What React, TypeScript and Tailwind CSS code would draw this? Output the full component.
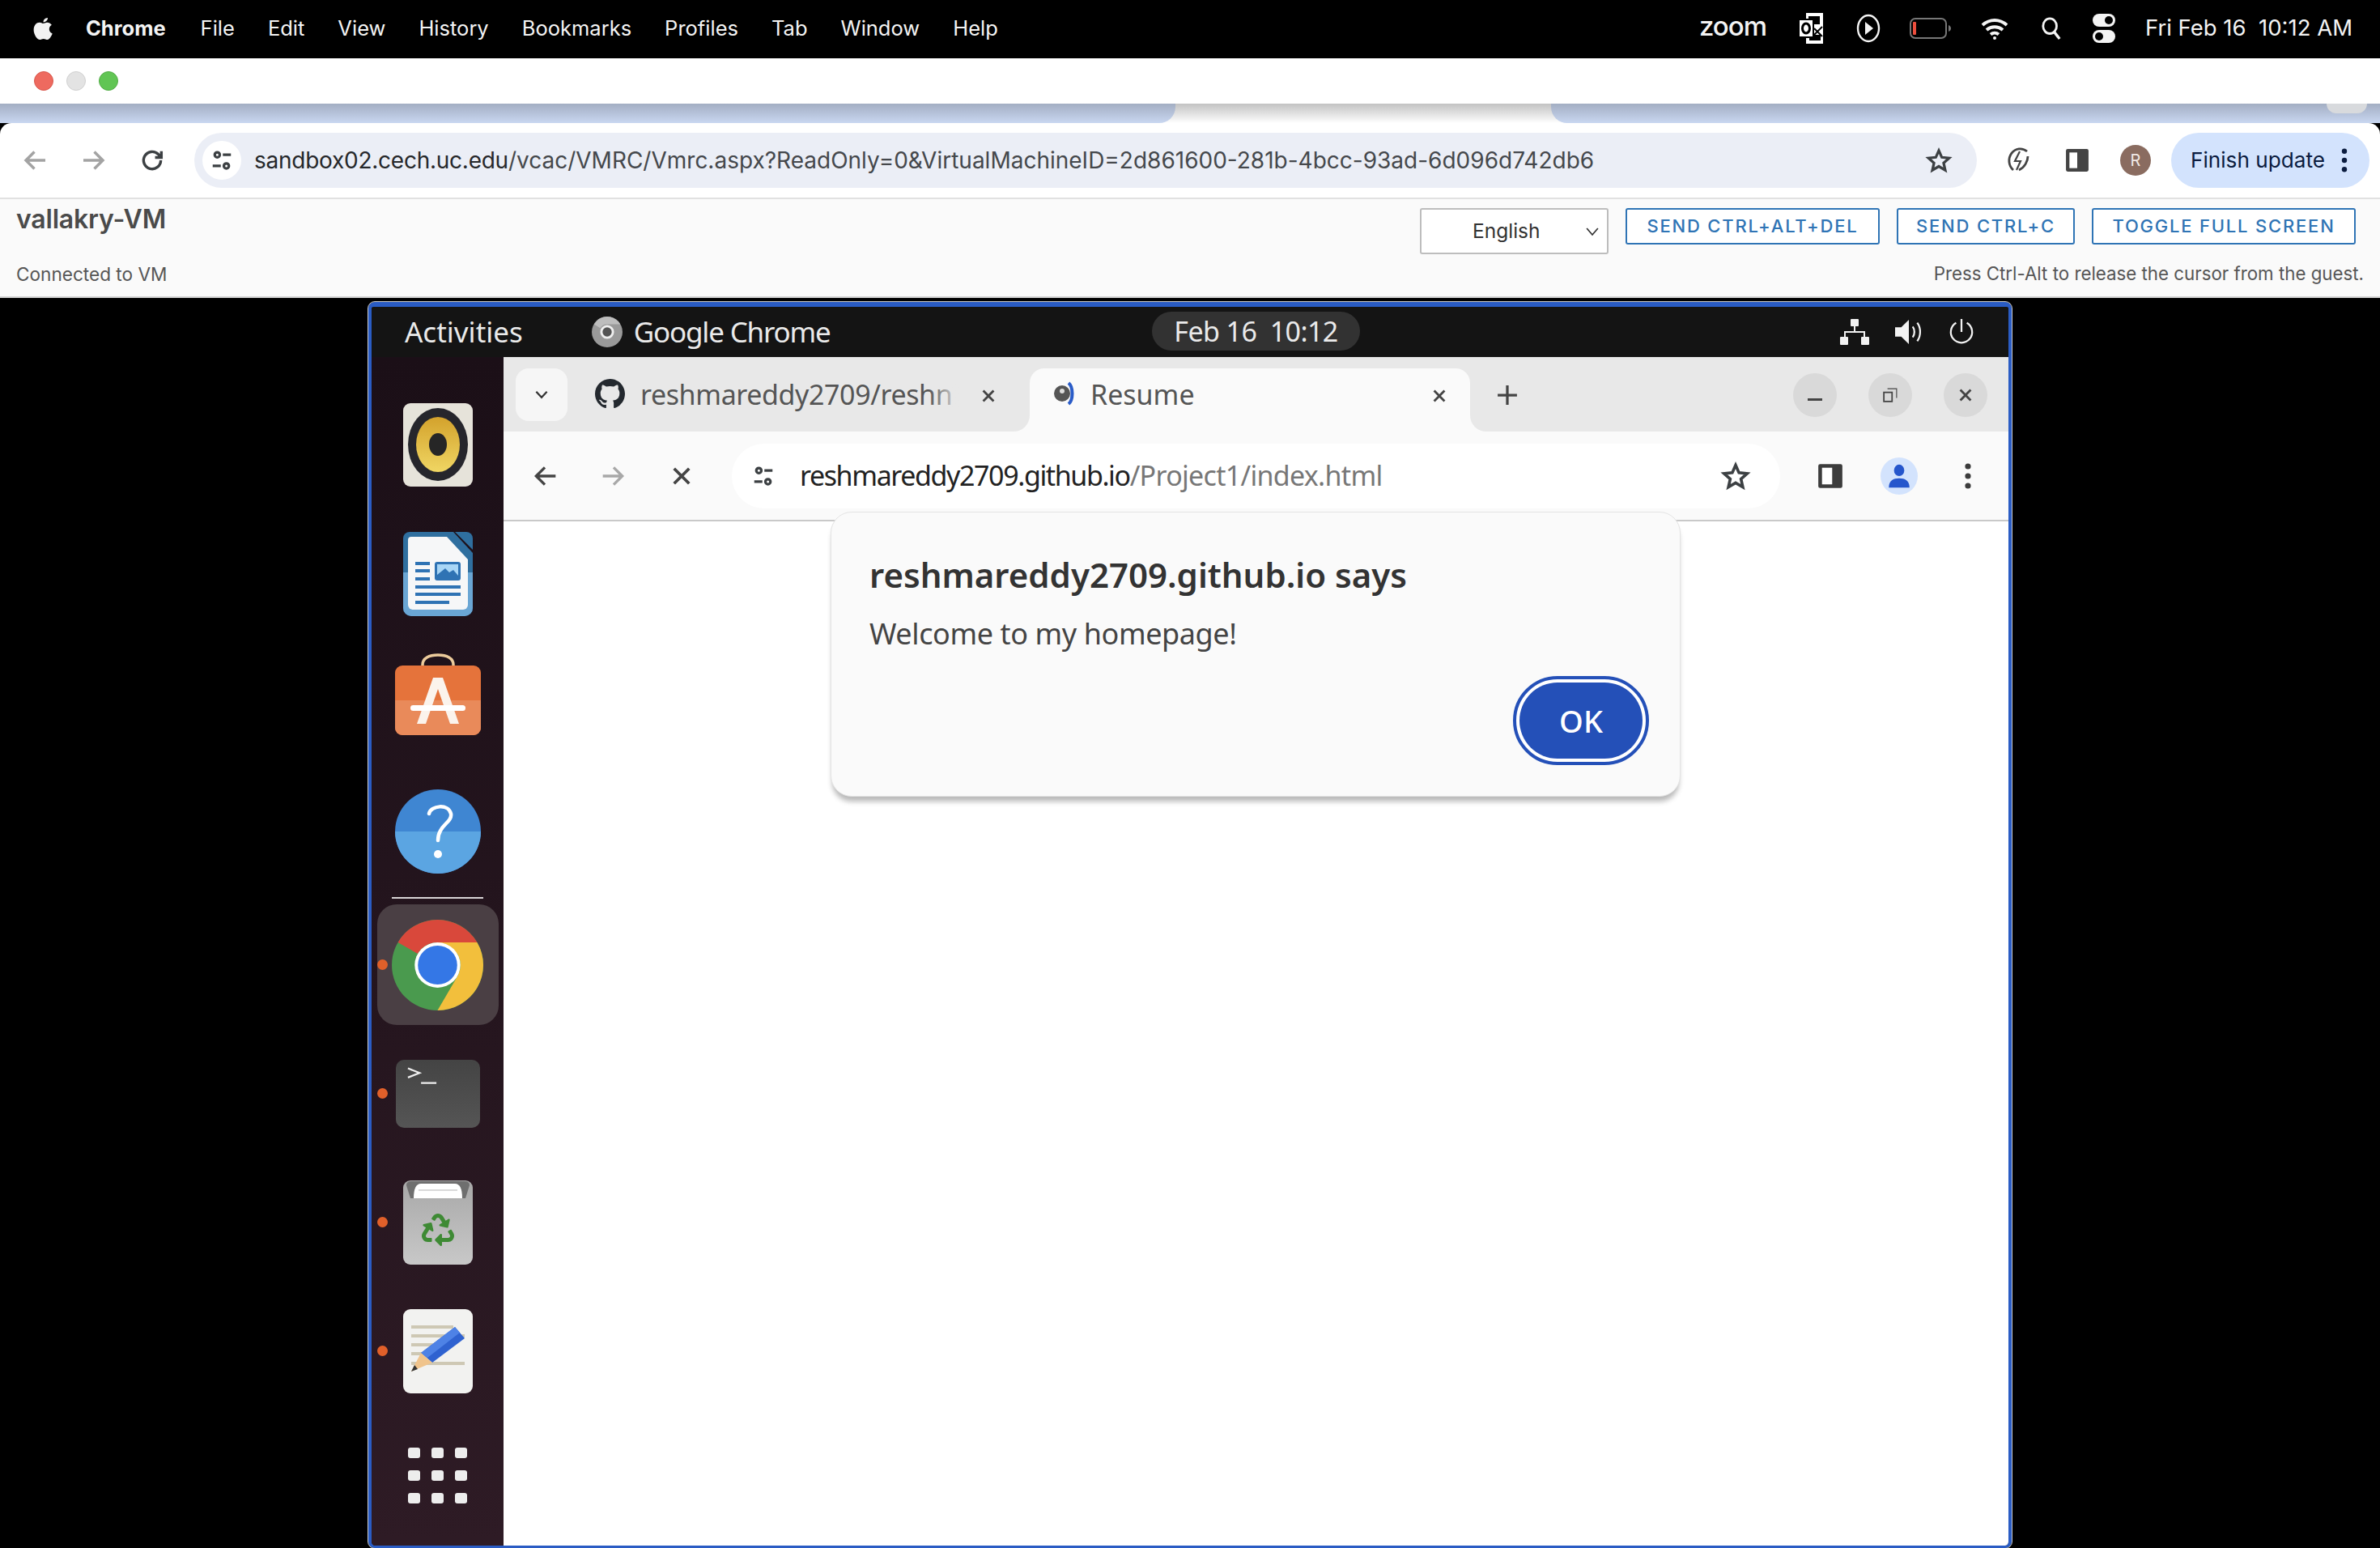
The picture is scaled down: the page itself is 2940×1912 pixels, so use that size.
import React from "react";
import { FaRecycle } from "react-icons/fa";

const MAC = { fontFamily: 'Inter, "Liberation Sans", sans-serif' };
const UB = { fontFamily: '"Noto Sans", "Open Sans", sans-serif' };

function AppleLogo() {
  return (
    <svg viewBox="0 0 24 28" className="w-[26px] h-[32px]" fill="#f2f2f2">
      <path d="M17.5 2c.2 2-1.800 5-5 5-.3-2.300 2-5 5-5z" />
      <path d="M12 8.500c1.300 0 2.800-1.200 5-1.200 1.600 0 3.700.8 5 2.800-4.200 2.600-3.400 8.200.8 9.900-1.100 3-3.500 7-5.800 7-1.600 0-2.500-1-4.300-1s-2.900 1-4.300 1C5.500 27 1.500 21 1.500 15.800c0-5.400 3.400-8.400 6.600-8.400 1.800 0 3 1.100 3.900 1.100z" />
    </svg>
  );
}

function Tune({ c = "#3c4043" }: { c?: string }) {
  return (
    <svg viewBox="0 0 24 24" className="w-[30px] h-[30px]" fill="none" stroke={c} strokeWidth="2.600">
      <circle cx="7.500" cy="6.500" r="2.500" />
      <path d="M13 6.500h8M3 17.500h8" />
      <circle cx="16.500" cy="17.500" r="2.500" />
    </svg>
  );
}

function Star({ c = "#3c4043", w = 34, h = 34 }: { c?: string; w?: number; h?: number }) {
  return (
    <svg viewBox="0 0 24 24" width={w} height={h} fill="none" stroke={c} strokeWidth="2.300" strokeLinejoin="miter">
      <path d="M12 3.500l2.600 5.900 6.400.6-4.800 4.300 1.400 6.300L12 17.300l-5.600 3.300 1.400-6.300L3 10l6.400-.6z" />
    </svg>
  );
}

function MenuBar() {
  const items = ["File", "Edit", "View", "History", "Bookmarks", "Profiles", "Tab", "Window", "Help"];
  return (
    <div className="h-[72px] shrink-0 bg-black text-[#f4f4f4] flex items-center text-[25.5px] pl-[40px] pr-[34px] pb-[2px]" style={MAC}>
      <AppleLogo />
      <span className="ml-[40px] font-bold">Chrome</span>
      <div className="flex gap-[41px] ml-[43px]">
        {items.map((m) => (
          <span key={m}>{m}</span>
        ))}
      </div>
      <div className="ml-auto flex items-center">
        <span className="text-[33px] font-medium tracking-[-1px] leading-none -mt-[6px]">zoom</span>
        <svg viewBox="0 0 32 40" className="w-[32px] h-[40px] ml-[39px]">
          <path d="M10 1h21v38H10z" fill="#fff" />
          <path d="M13 5h14v10H13zM14 28h14v7H14z" fill="#000" />
          <path d="M1 9h18v22H1z" fill="#fff" stroke="#000" strokeWidth="2" />
          <ellipse cx="10" cy="20" rx="4.500" ry="6" fill="none" stroke="#000" strokeWidth="3" />
          <path d="M20 20l10 10M30 18L20 28" stroke="#000" strokeWidth="2" />
        </svg>
        <svg viewBox="0 0 30 36" className="w-[30px] h-[36px] ml-[40px]" fill="none">
          <ellipse cx="15" cy="18" rx="13" ry="16" stroke="#f4f4f4" strokeWidth="2.400" />
          <path d="M11 10l10 8-10 8z" fill="#f4f4f4" />
        </svg>
        <svg viewBox="0 0 52 26" className="w-[52px] h-[26px] ml-[36px]" fill="none">
          <rect x="1" y="1" width="44" height="24" rx="6" stroke="#777" strokeWidth="2" />
          <rect x="4" y="5" width="4" height="16" rx="1" fill="#eb4e3d" />
          <path d="M48 9c2 1 3 2 3 4s-1 3-3 4z" fill="#777" />
        </svg>
        <svg viewBox="0 0 34 30" className="w-[34px] h-[30px] ml-[36px]" fill="none" stroke="#f4f4f4" strokeWidth="4">
          <path d="M2 11c9-8 21-8 30 0M7 17c6-5 14-5 20 0M12 22.500c3-2.500 7-2.500 10 0" />
          <circle cx="17" cy="27" r="2" fill="#f4f4f4" stroke="none" />
        </svg>
        <svg viewBox="0 0 28 32" className="w-[26px] h-[30px] ml-[40px]" fill="none" stroke="#f4f4f4" strokeWidth="3">
          <ellipse cx="12" cy="13" rx="9" ry="10" />
          <path d="M18 21l7 9" strokeWidth="3.600" />
        </svg>
        <svg viewBox="0 0 28 36" className="w-[28px] h-[36px] ml-[38px]" fill="#f4f4f4">
          <rect x="0" y="0" width="28" height="16" rx="8" />
          <circle cx="20" cy="8" r="5" fill="#000" />
          <rect x="0" y="20" width="28" height="16" rx="8" />
          <circle cx="8" cy="28" r="5" fill="#000" />
        </svg>
        <span className="ml-[37px] text-[27.5px]">Fri Feb 16&nbsp; 10:12 AM</span>
      </div>
    </div>
  );
}

function MacChrome() {
  return (
    <>
      <div className="h-[56px] shrink-0 bg-white flex items-center gap-[16px] pl-[42px]">
        <span className="w-[24px] h-[24px] rounded-full bg-[#ee6a5f] border border-[#d8574c]" />
        <span className="w-[24px] h-[24px] rounded-full bg-[#e3e3e3] border border-[#d0d0d0]" />
        <span className="w-[24px] h-[24px] rounded-full bg-[#61c554] border border-[#52ac46]" />
      </div>
      <div className="h-[24px] shrink-0 flex bg-gradient-to-b from-[#c2c2c2] to-white">
        <div className="w-[1452px] rounded-br-[20px] bg-gradient-to-b from-[#a3aec3] to-[#c9d7f1]" />
        <div className="flex-1" />
        <div className="w-[1024px] rounded-bl-[20px] bg-gradient-to-b from-[#a3aec3] to-[#c9d7f1] flex justify-end pr-[16px]">
          <div className="w-[50px] h-[12px] rounded-b-full bg-[#d8dadd]" />
        </div>
      </div>
      <div className="h-[94px] shrink-0 bg-white flex items-center rounded-t-[14px] border-b-2 border-[#e1e1e1] pl-[26px] pr-[13px] relative">
        <svg viewBox="0 0 24 24" className="w-[36px] h-[36px]" fill="none" stroke="#a3a3a3" strokeWidth="2.300"><path d="M20 12H5M11 5l-7 7 7 7" /></svg>
        <svg viewBox="0 0 24 24" className="w-[36px] h-[36px] ml-[35px]" fill="none" stroke="#a3a3a3" strokeWidth="2.300"><path d="M4 12h15M13 5l7 7-7 7" /></svg>
        <svg viewBox="0 0 24 24" className="w-[34px] h-[34px] ml-[38px]" fill="none" stroke="#3c4043" strokeWidth="2.400"><path d="M19.500 12a7.500 7.500 0 1 1-2.200-5.300L20 9.500M20 4v5.500h-5.500" /></svg>
        <div className="ml-[35px] w-[2202px] h-[68px] rounded-full bg-[#ebeef6] flex items-center pl-[10px] pr-[30px]">
          <div className="w-[48px] h-[48px] rounded-full bg-white flex items-center justify-center"><Tune /></div>
          <span className="ml-[16px] text-[#26282b] text-[28px] whitespace-nowrap" style={MAC}>
            <span className="tracking-[-0.25px]">sandbox02.cech.uc.edu</span><span className="text-[#45484c]">/vcac/VMRC/Vmrc.aspx?ReadOnly=0&amp;VirtualMachineID=2d861600-281b-4bcc-93ad-6d096d742db6</span>
          </span>
          <div className="ml-auto"><Star /></div>
        </div>
        <svg viewBox="0 0 28 34" className="w-[30px] h-[34px] ml-[36px]" fill="none" stroke="#444" strokeWidth="2.800">
          <path d="M25 6A13 14 0 1 0 8 29" />
          <path d="M26 12c0 6-4 14-11 17" />
          <path d="M16 6l-6 12h7l-5 11" strokeWidth="2.200" />
        </svg>
        <svg viewBox="0 0 28 28" className="w-[30px] h-[30px] ml-[43px]"><rect x="1" y="1" width="26" height="26" rx="2" fill="#444" /><rect x="5" y="5" width="9" height="18" fill="#fff" /></svg>
        <div className="ml-[38px] w-[38px] h-[38px] rounded-full bg-[#8a6c60] text-[#f0e8e4] text-[20px] flex items-center justify-center" style={MAC}>R</div>
        <div className="ml-[25px] w-[245px] h-[68px] rounded-full bg-[#d3e3fd] flex items-center pl-[24px] text-[#0b1c3f] text-[26.200px]" style={MAC}>
          <span className="whitespace-nowrap">Finish update</span>
          <svg viewBox="0 0 8 32" className="w-[8px] h-[30px] ml-[20px]" fill="#0b1c3f"><circle cx="4" cy="4" r="3.400" /><circle cx="4" cy="16" r="3.400" /><circle cx="4" cy="28" r="3.400" /></svg>
        </div>
      </div>
    </>
  );
}

function VmrcHeader() {
  const btn = "h-[45px] border-2 border-[#2f74b5] rounded-[3px] bg-white text-[#2f74b5] text-[22px] tracking-[1.800px] font-medium flex items-center justify-center whitespace-nowrap";
  return (
    <div className="h-[122px] shrink-0 bg-[#fafafa] border-b-2 border-[#d4d4d4] flex justify-between pl-[20px] pr-[20px] text-[#565656]" style={{ fontFamily: 'Inter, "Liberation Sans", sans-serif' }}>
      <div className="flex flex-col">
        <div className="mt-[7px] text-[32px] leading-[36px] font-semibold text-[#4a4a4a] tracking-[-0.2px]">vallakry-VM</div>
        <div className="mt-[35px] text-[22.600px] leading-[30px]">Connected to VM</div>
      </div>
      <div className="flex flex-col items-end">
        <div className="flex mt-[11px] mr-[10px] gap-[21px]">
          <div className="w-[233px] h-[57px] bg-white border-2 border-[#bdbdbd] rounded-[3px] flex items-center pl-[63px] pr-[10px] text-[24.500px] text-[#333] justify-between">
            <span>English</span>
            <svg viewBox="0 0 14 10" className="w-[16px] h-[12px]" fill="none" stroke="#333" strokeWidth="1.500"><path d="M1 1.500l6 7 6-7" /></svg>
          </div>
          <div className={`${btn} w-[314px]`}>SEND CTRL+ALT+DEL</div>
          <div className={`${btn} w-[220px]`}>SEND CTRL+C</div>
          <div className={`${btn} w-[326px]`}>TOGGLE FULL SCREEN</div>
        </div>
        <div className="mt-[9px] text-[22.300px] leading-[30px]">Press Ctrl-Alt to release the cursor from the guest.</div>
      </div>
    </div>
  );
}

function ChromeLogo({ w, h }: { w: number; h: number }) {
  return (
    <svg viewBox="0 0 100 100" width={w} height={h} preserveAspectRatio="none">
      <circle cx="50" cy="50" r="50" fill="#4a9a4e" />
      <path d="M50 0a50 50 0 0 1 43.300 25H50a25 25 0 0 0-21.700 12.500L6.700 25A50 50 0 0 1 50 0z" fill="#d9483b" />
      <path d="M93.300 25A50 50 0 0 1 50 100l21.700-37.500A25 25 0 0 0 71.700 37.500L50 25z" fill="#f2bf3c" />
      <circle cx="50" cy="50" r="25" fill="#fff" />
      <circle cx="50" cy="50" r="21.500" fill="#3477e6" />
    </svg>
  );
}

function Slot({ children, dot }: { children: React.ReactNode; dot?: boolean }) {
  return (
    <div className="h-[159px] flex items-center justify-center relative shrink-0">
      {dot && <span className="absolute left-[7px] top-1/2 -mt-[7px] w-[13px] h-[13px] rounded-full bg-[#e0602a]" />}
      {children}
    </div>
  );
}

function Dock() {
  return (
    <div className="w-[163px] shrink-0 bg-gradient-to-b from-[#1b0f17] to-[#2e1b25] pt-[29px] flex flex-col overflow-hidden">
      <Slot>
        <svg viewBox="0 0 86 103" className="w-[86px] h-[103px]">
          <defs>
            <linearGradient id="sp" x1="0" y1="0" x2="0" y2="1"><stop offset="0" stopColor="#d3a22c" /><stop offset="1" stopColor="#f0d663" /></linearGradient>
          </defs>
          <rect width="86" height="103" rx="9" fill="#e6e3da" />
          <ellipse cx="43" cy="51" rx="37" ry="45" fill="#26262c" />
          <ellipse cx="43" cy="51" rx="27" ry="34" fill="url(#sp)" />
          <ellipse cx="43" cy="51" rx="11" ry="14" fill="#262626" />
        </svg>
      </Slot>
      <Slot>
        <svg viewBox="0 0 86 104" className="w-[86px] h-[104px]">
          <path d="M8 0h54l24 26v68a10 10 0 0 1-10 10H10a10 10 0 0 1-10-10V8a8 8 0 0 1 8-8z" fill="#2f6f9f" />
          <path d="M0 50h86v44a10 10 0 0 1-10 10H10a10 10 0 0 1-10-10z" fill="#6aa6d4" />
          <path d="M64 0h14a8 8 0 0 1 8 8v14z" fill="#2f6f9f" />
          <path d="M10 6h44l26 28v56a6 6 0 0 1-6 6H12a6 6 0 0 1-6-6V10a4 4 0 0 1 4-4z" fill="#f6f7f8" />
          <g fill="#2f73b4">
            <rect x="15" y="37" width="18" height="4" />
            <rect x="15" y="46" width="18" height="4" />
            <rect x="15" y="56" width="18" height="4" />
            <rect x="15" y="66" width="56" height="4" />
            <rect x="15" y="75" width="56" height="4" />
            <rect x="15" y="85" width="42" height="4" />
            <rect x="39" y="37" width="32" height="23" rx="3" />
          </g>
          <path d="M42 40h26v14l-6-7-5 3-5-5-10 8z" fill="#a8d6f6" />
        </svg>
      </Slot>
      <Slot>
        <svg viewBox="0 0 106 102" className="w-[106px] h-[102px] -mt-[20px]">
          <path d="M34 18V14C34 6 42 2 53 2s19 4 19 12v4" fill="none" stroke="#eccb9b" strokeWidth="3.500" />
          <rect y="15" width="106" height="86" rx="9" fill="#e5733b" />
          <path d="M0 58h106v34a9 9 0 0 1-9 9H9a9 9 0 0 1-9-9z" fill="#e98a5a" />
          <path d="M47 30h12l20 57H68l-15-43-15 43H27z" fill="#fbf3ec" />
          <rect x="19" y="64" width="68" height="7" rx="3.500" fill="#fff" />
        </svg>
      </Slot>
      <Slot>
        <svg viewBox="0 0 106 104" className="w-[106px] h-[104px]">
          <ellipse cx="53" cy="52" rx="53" ry="52" fill="#3f86d2" />
          <path d="M0 52a53 52 0 0 0 106 0z" fill="#5ba5e2" />
          <path d="M42 30c2-10 24-13 27 0 2 11-16 14-16 33" fill="none" stroke="#fff" strokeWidth="4.500" strokeLinecap="round" />
          <ellipse cx="53" cy="80" rx="5" ry="5" fill="#fff" />
        </svg>
      </Slot>
      <div className="h-[6px] shrink-0 flex items-start justify-center pt-[2px]"><div className="w-[113px] h-[2px] bg-[#d8d4d6]" /></div>
      <Slot dot>
        <div className="w-[150px] h-[149px] rounded-[24px] bg-[#4a3f44] flex items-center justify-center">
          <ChromeLogo w={113} h={112} />
        </div>
      </Slot>
      <Slot dot>
        <div className="w-[104px] h-[84px] rounded-[10px] bg-gradient-to-b from-[#444] to-[#555] flex items-start pl-[14px] pt-[8px]">
          <svg viewBox="0 0 40 24" className="w-[38px] h-[24px]" fill="none" stroke="#eee" strokeWidth="2.400"><path d="M1 2l15 6-15 6M18 21h20" /></svg>
        </div>
      </Slot>
      <Slot dot>
        <div className="w-[86px] h-[104px] rounded-[9px] bg-gradient-to-b from-[#a8a8a8] to-[#c8c8c8] relative flex items-center justify-center pt-[18px]">
          <svg viewBox="0 0 86 24" className="absolute left-0 top-0 w-[86px] h-[24px]">
            <path d="M4 6c0-4 3-5 7-5h64c4 0 7 1 7 5l-5 16H9z" fill="#6f6f6f" />
            <path d="M13 22c0-12 3-18 9-18h42c6 0 9 6 9 18z" fill="#fff" />
            <path d="M19 12h48" stroke="#ccc" strokeWidth="1.500" />
          </svg>
          <FaRecycle className="w-[44px] h-[40px] text-[#3e8a34]" style={{ fontSize: 40 }} />
        </div>
      </Slot>
      <Slot dot>
        <svg viewBox="0 0 86 104" className="w-[86px] h-[104px]">
          <rect width="86" height="104" rx="9" fill="#f2f2f0" />
          <g fill="#cec8b4">
            <rect x="10" y="20" width="52" height="4" />
            <rect x="10" y="31" width="66" height="4" />
            <rect x="10" y="42" width="36" height="4" />
            <rect x="10" y="53" width="30" height="4" />
            <rect x="10" y="65" width="66" height="4" />
          </g>
          <path d="M64 22l12 14-40 30-14-12z" fill="#2f62d0" />
          <path d="M64 22l6 7-40 31-8-6z" fill="#4e82e6" />
          <path d="M22 54l14 12-26 11z" fill="#f0c48c" />
          <path d="M14 69l4 5-8 3z" fill="#333" />
        </svg>
      </Slot>
      <div className="h-[150px] shrink-0 flex items-center justify-center -mt-[1px]">
        <div className="grid grid-cols-3 gap-x-[14px] gap-y-[15px]">
          {Array.from({ length: 9 }).map((_, i) => (
            <span key={i} className="w-[15px] h-[13px] rounded-[3px] bg-[#ededed]" />
          ))}
        </div>
      </div>
    </div>
  );
}

function VmChrome() {
  return (
    <div className="flex-1 flex flex-col bg-white relative">
      <div className="h-[92px] shrink-0 bg-[#e8e8e8] flex pl-[15px] pt-[14px]">
        <div className="w-[64px] h-[65px] rounded-[16px] bg-[#f6f6f6] flex items-center justify-center">
          <svg viewBox="0 0 14 10" className="w-[16px] h-[11px]" fill="none" stroke="#333" strokeWidth="2"><path d="M1 1.500l6 6.500 6-6.500" /></svg>
        </div>
        <div className="w-[571px] flex items-start pt-[13px] pl-[34px]">
          <svg viewBox="0 0 16 16" width="37" height="37" preserveAspectRatio="none" fill="#24292f">
            <path d="M8 0C3.580 0 0 3.580 0 8c0 3.540 2.290 6.530 5.470 7.590.4.070.55-.17.55-.38 0-.19-.010-.82-.010-1.490-2.010.37-2.530-.49-2.690-.94-.09-.23-.48-.94-.82-1.130-.28-.15-.68-.52-.010-.53.63-.010 1.080.58 1.230.82.72 1.210 1.870.87 2.330.66.070-.52.280-.87.510-1.070-1.780-.2-3.640-.89-3.640-3.950 0-.87.310-1.590.820-2.150-.080-.2-.360-1.020.080-2.120 0 0 .670-.21 2.200.82.640-.18 1.320-.27 2-.27s1.360.09 2 .27c1.530-1.040 2.200-.82 2.200-.82.440 1.100.160 1.920.080 2.120.510.560.820 1.270.820 2.150 0 3.070-1.870 3.750-3.650 3.950.290.250.540.730.540 1.480 0 1.070-.010 1.930-.010 2.200 0 .210.150.460.550.380A8.013 8.013 0 0 0 16 8c0-4.420-3.580-8-8-8z" />
          </svg>
          <div className="ml-[19px] w-[392px] relative">
            <span className="text-[34px] leading-[38px] text-[#555] whitespace-nowrap tracking-[-0.4px]" style={UB}>reshmareddy2709/reshn</span>
            <div className="absolute right-[-4px] top-0 w-[40px] h-[44px] bg-gradient-to-r from-[#e8e8e8]/0 to-[#e8e8e8]" />
          </div>
          <svg viewBox="0 0 14 14" className="w-[18px] h-[18px] ml-[29px] mt-[12px]" fill="none" stroke="#444" strokeWidth="2.200"><path d="M2 2l10 10M12 2L2 12" /></svg>
        </div>
        <div className="w-[544px] h-[78px] rounded-t-[18px] bg-[#fafafa] flex items-start pt-[13px] pl-[28px] relative">
          <div className="absolute left-[-20px] bottom-0 w-[20px] h-[20px] bg-[#fafafa]"><div className="w-full h-full rounded-br-[20px] bg-[#e8e8e8]" /></div>
          <div className="absolute right-[-20px] bottom-0 w-[20px] h-[20px] bg-[#fafafa]"><div className="w-full h-full rounded-bl-[20px] bg-[#e8e8e8]" /></div>
          <svg viewBox="0 0 28 32" className="w-[28px] h-[32px] mt-[2px]">
            <circle cx="12" cy="16" r="10" fill="#555" />
            <circle cx="12" cy="13" r="3" fill="#ddd" />
            <path d="M20 3c6 5 6 21 0 26" fill="none" stroke="#2a5cc8" strokeWidth="4" />
          </svg>
          <span className="ml-[19px] text-[34px] leading-[38px] text-[#555]" style={UB}>Resume</span>
          <svg viewBox="0 0 14 14" className="w-[18px] h-[18px] ml-[293px] mt-[12px]" fill="none" stroke="#444" strokeWidth="2.200"><path d="M2 2l10 10M12 2L2 12" /></svg>
        </div>
        <svg viewBox="0 0 24 24" className="w-[26px] h-[26px] ml-[33px] mt-[20px]" fill="none" stroke="#444" strokeWidth="3"><path d="M12 1v22M1 12h22" /></svg>
        <div className="ml-auto flex gap-[39px] pr-[26px] pt-[6px]">
          <div className="w-[54px] h-[54px] rounded-full bg-[#d9d9d9] flex items-center justify-center"><div className="w-[18px] h-[3px] bg-[#444] mt-[10px]" /></div>
          <div className="w-[54px] h-[54px] rounded-full bg-[#d9d9d9] flex items-center justify-center">
            <svg viewBox="0 0 16 16" className="w-[18px] h-[18px]" fill="none" stroke="#444" strokeWidth="1.600"><rect x="1" y="5" width="9" height="10" /><path d="M5 1h10v10" strokeWidth="1" /></svg>
          </div>
          <div className="w-[54px] h-[54px] rounded-full bg-[#d9d9d9] flex items-center justify-center">
            <svg viewBox="0 0 14 14" className="w-[18px] h-[18px]" fill="none" stroke="#444" strokeWidth="2.200"><path d="M2 2l10 10M12 2L2 12" /></svg>
          </div>
        </div>
      </div>
      <div className="h-[111px] shrink-0 bg-[#fafafa] border-b-2 border-[#c9c9c9] flex items-center pl-[35px]">
        <svg viewBox="0 0 24 24" className="w-[32px] h-[32px]" fill="none" stroke="#444" strokeWidth="2.500"><path d="M22 12H4M12 4l-8 8 8 8" /></svg>
        <svg viewBox="0 0 24 24" className="w-[32px] h-[32px] ml-[53px]" fill="none" stroke="#a8a8a8" strokeWidth="2.500"><path d="M2 12h18M12 4l8 8-8 8" /></svg>
        <svg viewBox="0 0 14 14" className="w-[26px] h-[26px] ml-[55px]" fill="none" stroke="#444" strokeWidth="2"><path d="M2 2l10 10M12 2L2 12" /></svg>
        <div className="ml-[49px] w-[1295px] h-[80px] bg-white rounded-full flex items-center pl-[24px] pr-[36px]">
          <Tune />
          <span className="ml-[30px] text-[34px] text-[#222] whitespace-nowrap" style={UB}>
            <span className="tracking-[-1.400px]">reshmareddy2709.github.io</span><span className="text-[#777] tracking-[-0.700px]">/Project1/index.html</span>
          </span>
          <div className="ml-auto"><Star w={38} h={38} /></div>
        </div>
        <svg viewBox="0 0 28 28" className="w-[32px] h-[34px] ml-[46px]"><rect x="1" y="1" width="26" height="26" rx="2" fill="#3c3c3c" /><rect x="5" y="5" width="11" height="18" fill="#fff" /></svg>
        <div className="ml-[46px] w-[46px] h-[46px] rounded-full bg-[#d3e3fd] flex items-center justify-center">
          <svg viewBox="0 0 24 24" className="w-[34px] h-[34px]" fill="#2556cc"><ellipse cx="12" cy="7" rx="4.500" ry="5" /><path d="M3 22c0-6 4-8 9-8s9 2 9 8z" /></svg>
        </div>
        <svg viewBox="0 0 8 32" className="w-[8px] h-[32px] ml-[58px]" fill="#3c3c3c"><circle cx="4" cy="4" r="3.600" /><circle cx="4" cy="16" r="3.600" /><circle cx="4" cy="28" r="3.600" /></svg>
      </div>
      <div className="absolute left-[404px] top-[191px] w-[1050px] h-[352px] bg-[#fafafa] rounded-[26px] border border-[#e4e4e4] shadow-[0_8px_6px_-2px_rgba(0,0,0,0.28)]" style={UB}>
        <div className="absolute left-[47px] top-[52px] text-[42px] leading-[50px] font-semibold text-[#333] whitespace-nowrap">reshmareddy2709.github.io says</div>
        <div className="absolute left-[47px] top-[128px] text-[36px] leading-[44px] text-[#444] tracking-[-0.4px] whitespace-nowrap">Welcome to my homepage!</div>
        <div className="absolute left-[842px] top-[202px] w-[168px] h-[110px] rounded-full border-[4px] border-[#2450b8] bg-white p-[4px]">
          <div className="w-full h-full rounded-full bg-[#2450b8] flex items-center justify-center text-white text-[38px] font-medium">OK</div>
        </div>
      </div>
    </div>
  );
}

function VmFrame() {
  return (
    <div className="flex-1 bg-black pt-[5px] pl-[455px] pr-[455px] flex flex-col min-h-0">
      <div className="flex-1 min-h-0 flex flex-col bg-[#141414] rounded-t-[8px] border-[4px] border-t-[6px] border-b-[3px] border-[#2a5cc4] outline outline-1 outline-white/80 rounded-b-[8px] overflow-hidden">
        <div className="h-[62px] shrink-0 bg-[#141414] text-[#eaeaea] flex items-center relative text-[35px]" style={UB}>
          <span className="ml-[41px]">Activities</span>
          <svg viewBox="0 0 40 40" className="w-[38px] h-[38px] ml-[85px]" preserveAspectRatio="none">
            <circle cx="20" cy="20" r="20" fill="#9a9a9a" />
            <path d="M20 0a20 20 0 0 1 17 10H20a10 10 0 0 0-9 5L3 10A20 20 0 0 1 20 0z" fill="#bdbdbd" />
            <circle cx="20" cy="20" r="9" fill="#f0f0f0" />
            <circle cx="20" cy="20" r="6" fill="#555" />
          </svg>
          <span className="ml-[14px] tracking-[-1.200px]">Google Chrome</span>
          <div className="absolute left-[964px] top-[6px] w-[257px] h-[48px] rounded-full bg-[#323232] flex items-center justify-center text-[34px] tracking-[-0.6px]">Feb 16&nbsp; 10:12</div>
          <div className="ml-auto flex items-center gap-[32px] pr-[42px]">
            <svg viewBox="0 0 36 32" className="w-[36px] h-[32px]" fill="#f2f2f2">
              <rect x="13" y="0" width="10" height="9" rx="1" />
              <rect x="0" y="22" width="10" height="10" rx="1" />
              <rect x="26" y="22" width="10" height="10" rx="1" />
              <path d="M17 9h2v6h12v7h-2v-5H7v5H5v-7h12z" />
            </svg>
            <svg viewBox="0 0 36 32" className="w-[34px] h-[32px]" fill="#f2f2f2">
              <path d="M0 10h8l10-10v32L8 22H0z" />
              <path d="M23 9c3 4 3 10 0 14M29 4c5 7 5 17 0 24" fill="none" stroke="#f2f2f2" strokeWidth="2.400" />
            </svg>
            <svg viewBox="0 0 32 34" className="w-[32px] h-[32px]" fill="none" stroke="#f2f2f2" strokeWidth="2.400">
              <path d="M16 0v17M9 5a14 14 0 1 0 14 0" />
            </svg>
          </div>
        </div>
        <div className="flex-1 min-h-0 flex">
          <Dock />
          <VmChrome />
        </div>
      </div>
    </div>
  );
}

export default function App() {
  return (
    <div className="w-[2940px] h-[1912px] flex flex-col overflow-hidden bg-black">
      <MenuBar />
      <MacChrome />
      <VmrcHeader />
      <VmFrame />
    </div>
  );
}
